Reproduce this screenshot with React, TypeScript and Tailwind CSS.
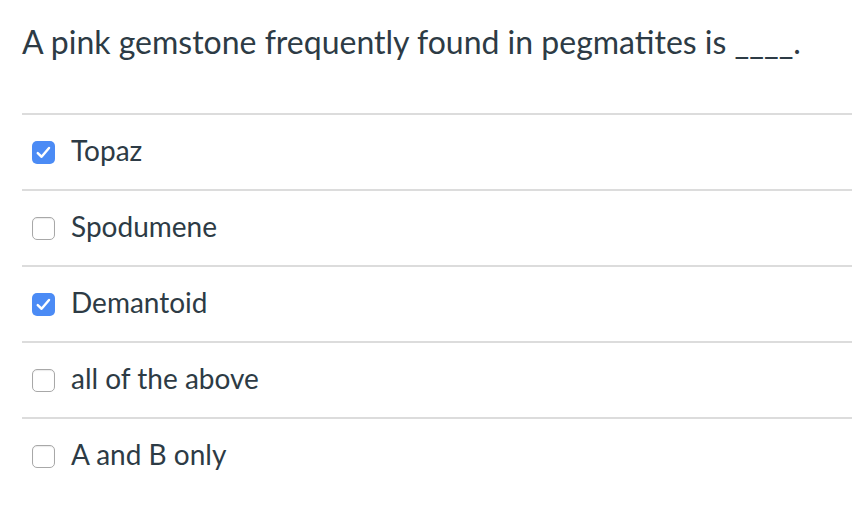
const ANSWERS = [
  { label: 'Topaz', checked: true },
  { label: 'Spodumene', checked: false },
  { label: 'Demantoid', checked: true },
  { label: 'all of the above', checked: false },
  { label: 'A and B only', checked: false },
];

function Box({ checked }: { checked: boolean }) {
  if (checked) {
    return (
      <span className="w-[23px] h-[23px] rounded-[5px] bg-[#4b8bf5] flex items-center justify-center shrink-0">
        <svg width="17" height="17" viewBox="0 0 16 16" fill="none">
          <path d="M2.6 8.6 L6.2 12 L13.2 3.8" stroke="white" strokeWidth="2.3" strokeLinecap="round" strokeLinejoin="round" />
        </svg>
      </span>
    );
  }
  return <span className="w-[23px] h-[23px] rounded-[5px] border-[1.5px] border-[#a8a8a8] bg-white shrink-0 shadow-[inset_0_1px_1px_rgba(0,0,0,0.08)]" />;
}

export default function App() {
  return (
    <div className="min-h-screen bg-white pl-[22px] pt-[22px] text-[#2d3b45] font-['Lato','Liberation_Sans',sans-serif]">
      <h1 className="text-[32px] leading-[40px] font-normal">
        A pink gemstone frequently found in pegmatites is ____.
      </h1>
      <div className="mt-[51px]">
        {ANSWERS.map(({ label, checked }) => (
          <div key={label} className="h-[76px] flex items-center gap-4 pl-[10px] border-t-2 border-[#dcdcdc]">
            <Box checked={checked} />
            <span className="text-[28px] leading-none mb-[4px]">{label}</span>
          </div>
        ))}
      </div>
    </div>
  );
}
